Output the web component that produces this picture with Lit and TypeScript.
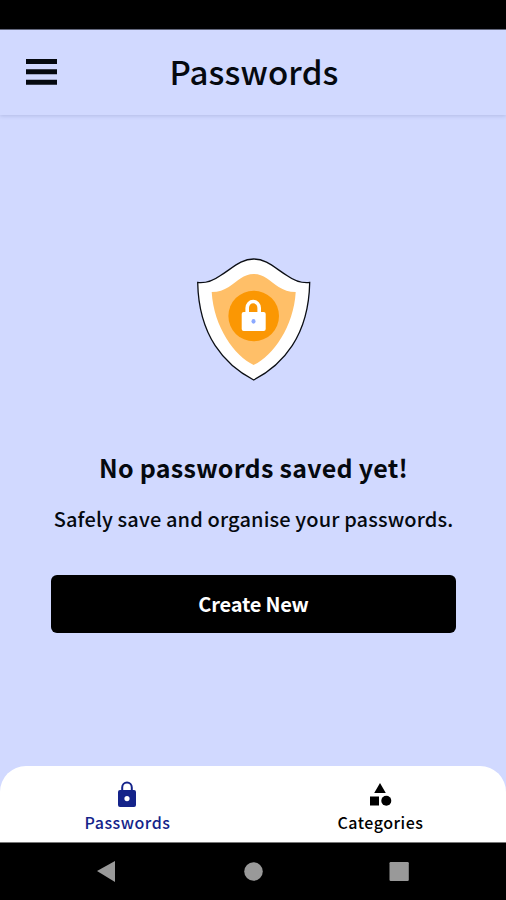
import { LitElement, html, css } from "lit";
import { customElement } from "lit/decorators.js";

@customElement("app-root")
export class AppRoot extends LitElement {
  static styles = css`
    :host {
      display: flex;
      flex-direction: column;
      width: 100%;
      height: 100vh;
      overflow: hidden;
      background: #d1d9ff;
      color: #05090f;
      font-family: "Noto Sans CJK SC", "Noto Sans", sans-serif;
      font-weight: 500;
    }
    * { box-sizing: border-box; }
    svg { display: block; }
    .status { flex: none; height: 30px; background: #000; border-bottom: 1px solid #666a7d; }
    .header {
      flex: none;
      height: 85px;
      padding-bottom: 2px;
      display: grid;
      grid-template-columns: 57px 1fr 55px;
      align-items: center;
      box-shadow: 0 1px 4px rgba(60, 70, 130, 0.2);
    }
    .menu { padding: 0 0 0 26px; border: 0; background: none; }
    h1, h2, p { margin: 0; text-align: center; white-space: nowrap; }
    h1 { padding-bottom: 2px; font-size: 33px; line-height: 48px; font-weight: 500; letter-spacing: 0.15px; }
    .main { flex: 1; display: flex; flex-direction: column; align-items: center; padding: 142px 0 0 1px; }
    h2 { margin-top: 65px; font-size: 25px; line-height: 38px; font-weight: 700; letter-spacing: 0.27px; }
    .hint { margin-top: 18px; font-size: 20px; line-height: 30px; letter-spacing: 0.13px; }
    .create {
      margin-top: 41px;
      width: 405px;
      height: 58px;
      border: 0;
      border-radius: 6px;
      background: #000;
      color: #fff;
      font: 700 20px/30px "Noto Sans CJK SC", "Noto Sans", sans-serif;
      letter-spacing: -0.2px;
    }
    .tabs {
      flex: none;
      height: 76px;
      display: grid;
      grid-template-columns: 1fr 1fr;
      background: #fff;
      border-radius: 26px 26px 0 0;
    }
    .tab {
      display: flex;
      flex-direction: column;
      align-items: center;
      padding-top: 14px;
      font-size: 16px;
      line-height: 24px;
      color: #000;
    }
    .tab svg { margin-bottom: 2px; }
    .tab span { padding-left: 2px; letter-spacing: 0.5px; }
    .active { color: #14238a; }
    .system { flex: none; height: 58px; background: #000; border-top: 1px solid #777; }
  `;

  render() {
    return html`
      <div class="status"></div>
      <header class="header">
        <button class="menu" aria-label="Menu">
          <svg width="31" height="26" viewBox="0 0 31 26">
            <path d="M0 0h31v5H0zM0 10.3h31v5H0zM0 20.8h31v5H0z" fill="#05090f" />
          </svg>
        </button>
        <h1>Passwords</h1>
      </header>
      <main class="main">
        <svg width="114" height="126" viewBox="0.3 0 114 126">
          <path d="M57 2C70 2 78 11 91 19C98 24 104 26.5 113 25.5C112 79 86 108 57 123C28 108 2 79 1 25.5C10 26.5 16 24 23 19C36 11 44 2 57 2Z" fill="#fff" stroke="#0b0e14" stroke-width="1.3" />
          <path d="M57 17C67 17 73 24 82 30C87 33 92 35 99 35C97 70 76 99 57 108C38 99 17 70 15 35C22 35 27 33 32 30C41 24 47 17 57 17Z" fill="#ffbf68" />
          <circle cx="57" cy="59" r="25.3" fill="#fb9703" />
          <path d="M50.5 57V51a6 6.5 0 0 1 12 0v6" fill="none" stroke="#fff" stroke-width="3.6" />
          <rect x="45" y="55" width="24" height="19" rx="2" fill="#fff" />
          <ellipse cx="56.8" cy="64.3" rx="2" ry="2.4" fill="#8ba9ff" />
        </svg>
        <h2>No passwords saved yet!</h2>
        <p class="hint">Safely save and organise your passwords.</p>
        <button class="create">Create New</button>
      </main>
      <nav class="tabs">
        <div class="tab active">
          <svg width="28" height="28" viewBox="0 0 28 28">
            <path d="M9.2 12V7.5a4.8 5 0 0 1 9.6 0V12" fill="none" stroke="currentColor" stroke-width="2" />
            <path fill-rule="evenodd" d="M7 10h14a2 2 0 0 1 2 2v13a2 2 0 0 1-2 2H7a2 2 0 0 1-2-2V12a2 2 0 0 1 2-2Zm7 6a2.6 2.6 0 1 0 0 5.2 2.6 2.6 0 0 0 0-5.2Z" fill="currentColor" />
          </svg>
          <span>Passwords</span>
        </div>
        <div class="tab">
          <svg width="28" height="28" viewBox="0 0 28 28">
            <path d="M14 3L19.8 13H8.2ZM4 16.5h9v9H4z" fill="currentColor" />
            <circle cx="20.3" cy="20.8" r="5" fill="currentColor" />
          </svg>
          <span>Categories</span>
        </div>
      </nav>
      <footer class="system">
        <svg width="506" height="57" viewBox="0 0 506 57">
          <path d="M97 28L115 18v21Z" fill="#999" />
          <circle cx="253.5" cy="28.5" r="9.3" fill="#999" />
          <rect x="389.5" y="19" width="19.3" height="19" rx="1.2" fill="#999" />
        </svg>
      </footer>
    `;
  }
}
